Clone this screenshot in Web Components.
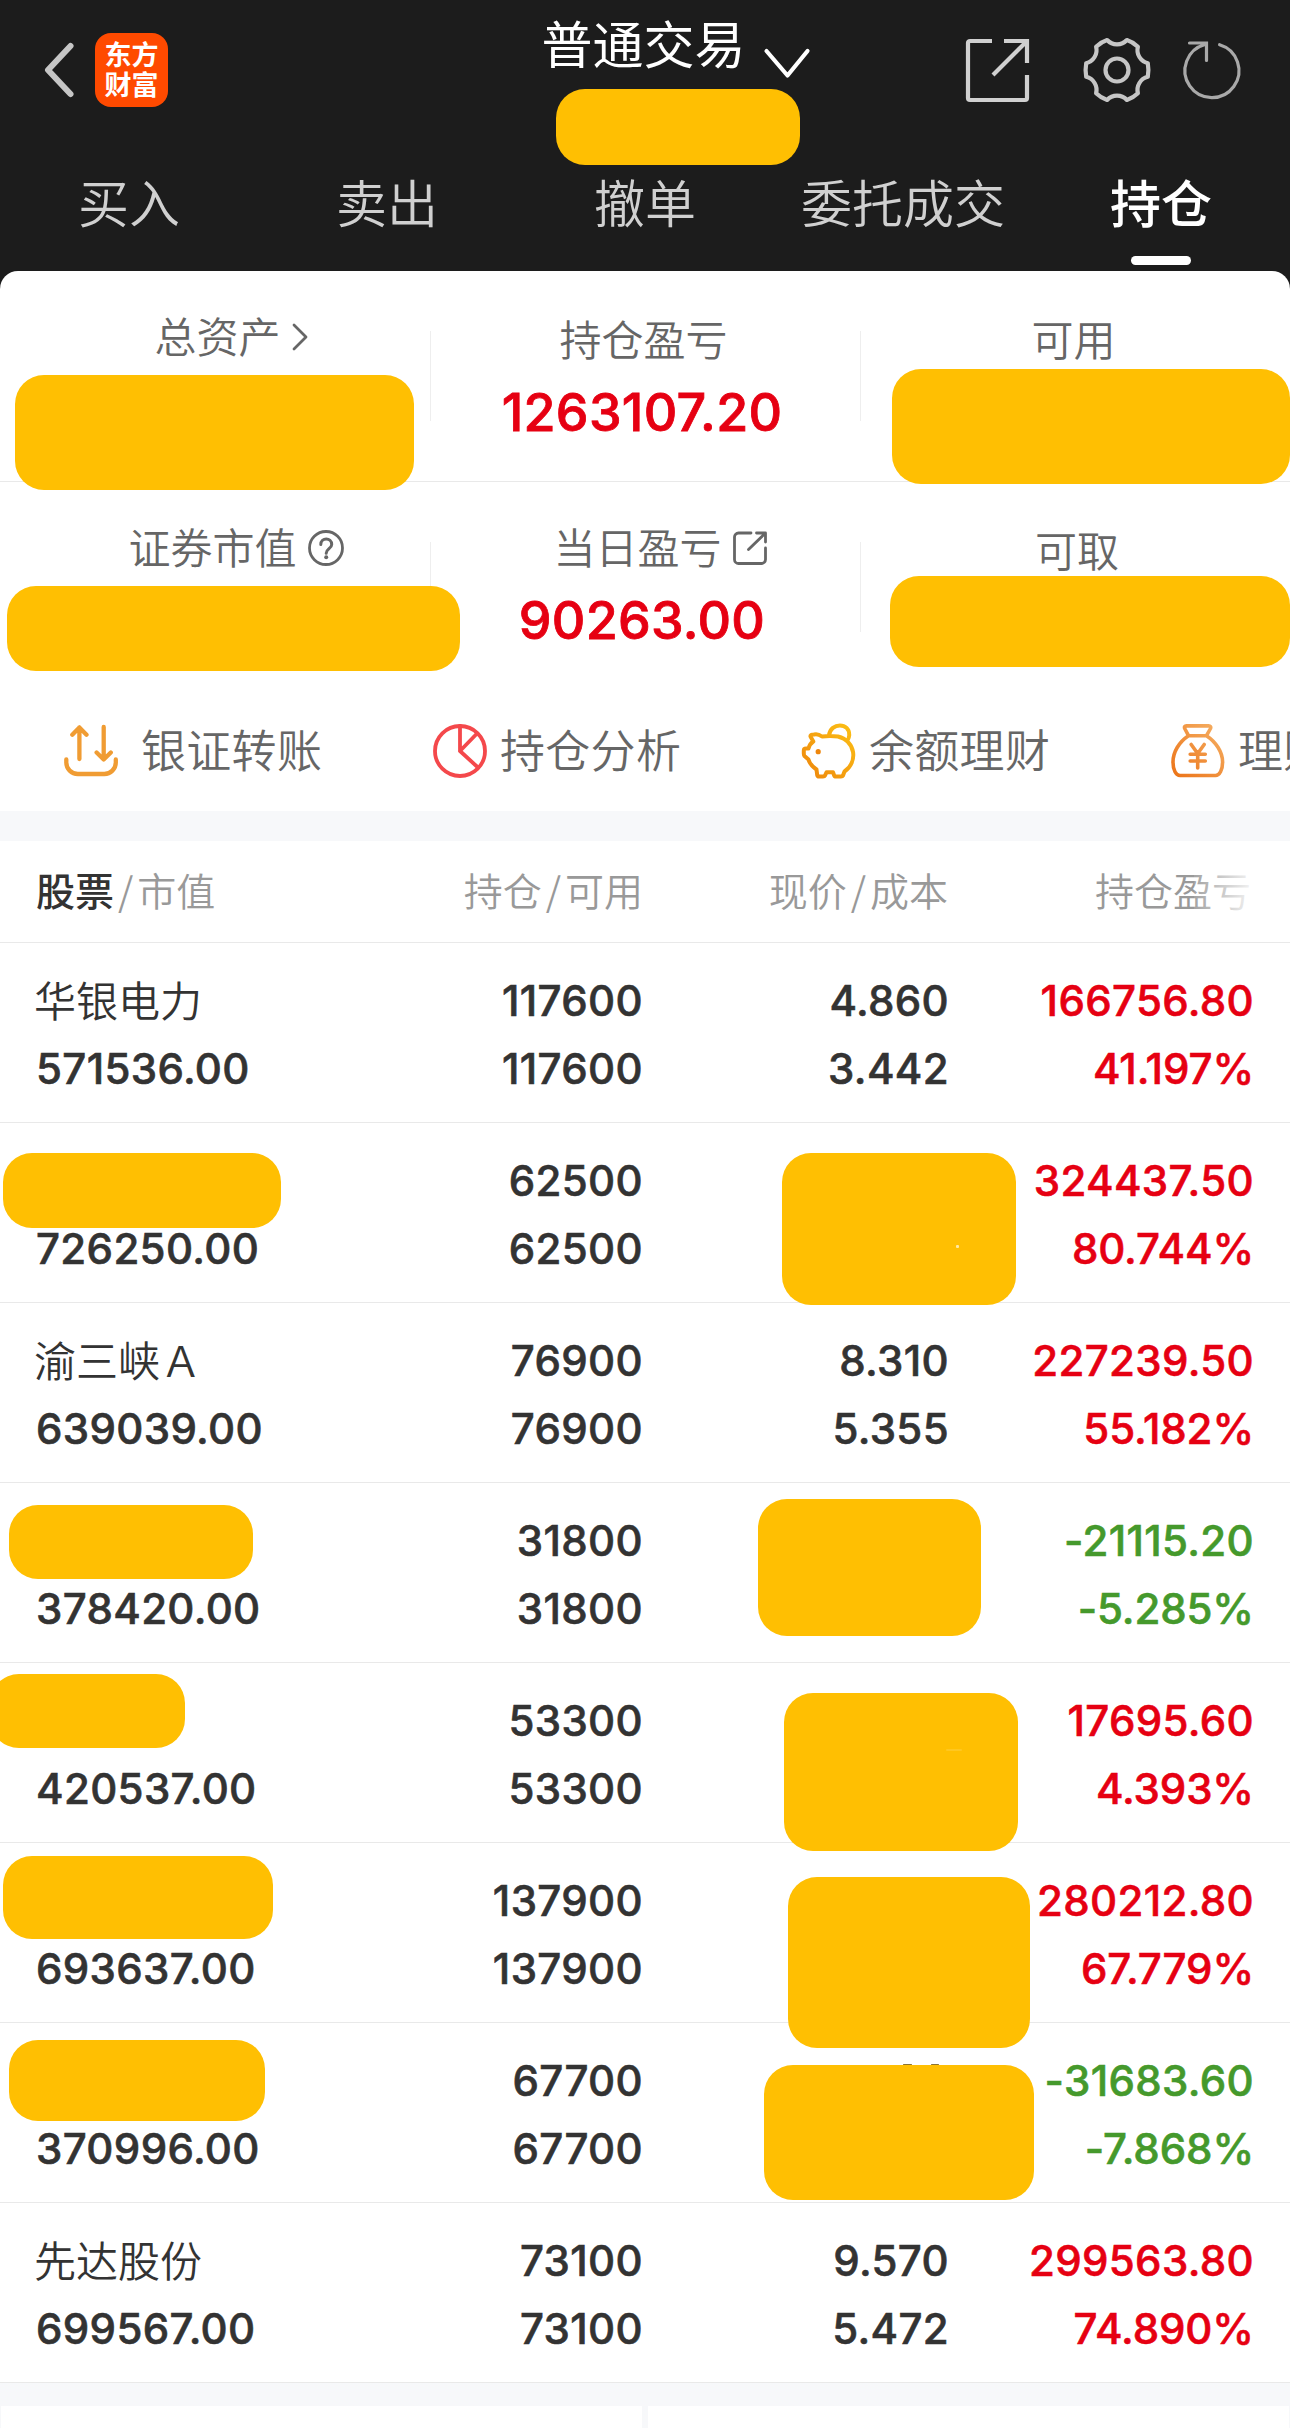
<!DOCTYPE html>
<html lang="zh-CN">
<head>
<meta charset="utf-8">
<title>普通交易</title>
<style>
  html, body {
    margin: 0;
    padding: 0;
  }

  body {
    width: 1290px;
    height: 2428px;
    overflow: hidden;
    background: #1c1c1c;
    color: #333;
    font-family: "Noto Sans CJK SC", "Noto Sans", sans-serif;
  }
</style>
</head>
<body>
<trade-app></trade-app>

<script>
/* Yellow block that hides private data. x and y are relative to its parent */
class PrivacyMask extends HTMLElement {
  constructor() {
    super();
    const shadow = this.attachShadow({ mode: "open" });
    shadow.innerHTML = `
      <style>
        :host {
          position: absolute;
          z-index: 2;
          background: #ffbf02;
          border-radius: 29px;
        }
      </style>
      <slot></slot>`;
  }

  connectedCallback() {
    const [x, y, w, h] = this.getAttribute("box").split(" ");
    this.style.left = x + "px";
    this.style.top = y + "px";
    this.style.width = w + "px";
    this.style.height = h + "px";
  }
}
customElements.define("privacy-mask", PrivacyMask);


/* All icons of the page, picked by name */
const ICONS = {
  back: [30, 56, `<path d="M26.5 4L4 28l22.5 24" stroke-width="6"/>`],
  down: [46, 32, `<path d="M2.500 3L23.500 27.500L43.500 3" stroke-width="4.200"/>`],
  share: [63, 63, `<path d="M26 2H4a2 2 0 0 0-2 2V59a2 2 0 0 0 2 2H59a2 2 0 0 0 2-2V36M38 2H61V24M61 2L27 36" stroke-width="4.200" stroke-linecap="butt" stroke-linejoin="miter"/>`],
  gear: [68, 68, `<g transform="translate(34 34)" stroke-width="4.200">
      <path d="M30.800-6.800Q32-0 30.800 6.800A13.500 13.500 0 0 0 20.900 23.300Q16 28 9.900 30A13.500 13.500 0 0 0-9.900 30Q-16 28-20.900 23.300A13.500 13.500 0 0 0-30.800 6.800Q-32 0-30.800-6.800A13.500 13.500 0 0 0-20.900-23.300Q-16-28-9.900-30A13.500 13.500 0 0 0 9.900-30Q16-28 20.900-23.300A13.500 13.500 0 0 0 30.800-6.800Z"/>
      <circle r="11.500"/></g>`],
  refresh: [60, 60, `<path d="M36.600 4.700A27 27 0 1 1 22 4.500M6.500 3H23.500V20.500" stroke-width="3.200" stroke-linejoin="miter"/>`],
  right: [17, 28, `<path d="M2 2L14 14L2 26" stroke-width="2.800"/>`],
  help: [36, 36, `<circle cx="18" cy="18" r="16.500" stroke-width="2.800"/><path d="M12.800 14.500c0-7.500 10.900-7.500 10.900 0c0 4-5.500 4.500-5.500 8.800" stroke-width="3"/><circle cx="18.200" cy="27.300" r="2" fill="currentColor" stroke="none"/>`],
  open: [34, 34, `<path d="M18 2H5.500A4 4 0 0 0 1.500 6V28.500a4 4 0 0 0 4 4H28.500a4 4 0 0 0 4-4V17M23.500 2H32.500V11M32 2.500L15.500 18.500" stroke-width="2.800"/>`],
  transfer: [54, 54, `<path d="M15.400 35V3.500M8.300 10.800L15.400 3.500L22.500 10.800M39.700 3V35.500M32.600 28.500L39.700 35.500L46.800 28.500M2.300 35.500V38.500a11.500 11.500 0 0 0 11.500 11.500H40.300a11.500 11.500 0 0 0 11.500-11.500V35.500" stroke="#f09c33" stroke-width="4.300"/>`],
  analysis: [54, 54, `<g stroke="#f4484b" stroke-width="3.800"><circle cx="27" cy="27" r="25"/><path d="M27 2V27L44 9.500M27 27L45 43.500"/></g>`],
  piggy: [54, 54, `<defs><linearGradient id="p" x1="0" y1="1" x2="1" y2="0"><stop offset="0" stop-color="#ee860c"/><stop offset="1" stop-color="#fcc015"/></linearGradient></defs>
      <g stroke="url(#p)" stroke-width="4"><path d="M12 10.500Q16 9.500 20 12.500Q28 11.500 36 12.500C54 17 56 38 42.500 47.500L41 51.500Q40.500 52.500 39 52.500H34Q32.500 52.500 32 51L31 48.300H24.500L23 51.500Q22.500 52.500 21 52.500H17Q15.500 52.500 15.200 51L14.500 45.500Q8 41 6.500 35.500L2.500 32Q1.800 31 1.800 29.500V26.500Q1.800 24.500 4 24.500H6.500Q7.500 20 11.300 17.500L8.500 12.500Q8 10.500 12 10.500ZM27 11.500C28.500-2 48-2 47.200 11.500Q47 14 45.500 16.500"/></g>
      <circle cx="16.200" cy="27.700" r="2.600" fill="#ee860c" stroke="none"/>`],
  bag: [54, 54, `<defs><linearGradient id="b" x1="0" y1="1" x2="1" y2="0"><stop offset="0" stop-color="#ec7418"/><stop offset="1" stop-color="#f5b065"/></linearGradient></defs>
      <g stroke="url(#b)" stroke-width="3.600"><path d="M15.500 1.900H37.500Q40.500 2 39.500 4.500L35.500 11.700H17.500L13.700 4.500Q12.800 2 15.500 1.900ZM17.500 11.700C8 18 2 28 2 38C2 46 5 51.500 9 51.500H44.500C48.500 51.500 51.600 46 51.600 38C51.600 28 45 18 35.500 11.700M20.200 20.500L26.700 29.500L33.200 20.500M19.200 30.200H34.300M19.200 37H34.300M26.700 29.500V44"/></g>`]
};

class AppIcon extends HTMLElement {
  constructor() {
    super();
    this.attachShadow({ mode: "open" });
  }

  connectedCallback() {
    const [w, h, body] = ICONS[this.getAttribute("name")];
    this.shadowRoot.innerHTML = `
      <style>
        :host { display: block; flex: none; width: ${w}px; height: ${h}px; }
        svg { display: block; overflow: visible; }
      </style>
      <svg width="${w}" height="${h}" viewBox="0 0 ${w} ${h}" fill="none" stroke="currentColor"
        stroke-linecap="round" stroke-linejoin="round">${body}</svg>`;
  }
}
customElements.define("app-icon", AppIcon);


class TradeHeader extends HTMLElement {
  constructor() {
    super();
    const shadow = this.attachShadow({ mode: "open" });
    shadow.innerHTML = `
      <style>
        :host {
          display: block;
          position: relative;
          height: 271px;
          color: #c6c6c6;
        }
        .bar {
          display: grid;
          grid-template-columns: 1fr auto 1fr;
          height: 140px;
        }
        .left, .right {
          display: flex;
          align-items: center;
        }
        .left { padding-left: 44px; gap: 21px; }
        .right { justify-content: flex-end; padding-right: 47px; }
        .right app-icon:nth-child(1) { color: #d0d0d0; margin-right: 54px; }
        .right app-icon:nth-child(2) { margin-right: 32px; }
        .right app-icon:nth-child(3) { color: #a9a9a9; }
        .logo {
          width: 73px;
          height: 74px;
          box-sizing: border-box;
          padding: 6px 9px 0;
          border-radius: 16px;
          background: #ff4a00;
          color: #fff;
          font-size: 27px;
          font-weight: 700;
          line-height: 30px;
          text-align: center;
        }
        .title {
          display: flex;
          color: #fff;
          font-size: 51px;
          line-height: 51px;
          font-weight: 400;
          padding: 17px 0 0 61px;
          gap: 18px;
        }
        .title app-icon { margin-top: 31px; }
        nav {
          display: grid;
          grid-template-columns: repeat(5, 1fr);
          height: 131px;
          font-size: 51px;
          font-weight: 350;
          line-height: 123px;
          text-align: center;
          color: #d0d0d0;
        }
        .active {
          display: flex;
          flex-direction: column;
          align-items: center;
          color: #fff;
          font-weight: 500;
        }
        .active::after {
          content: "";
          width: 60px;
          height: 9px;
          margin-top: -7px;
          border-radius: 5px;
          background: #fff;
        }
      </style>
      <div class="bar">
        <div class="left">
          <app-icon name="back"></app-icon>
          <div class="logo">东方财富</div>
        </div>
        <div class="title">普通交易<app-icon name="down"></app-icon></div>
        <div class="right">
          <app-icon name="share"></app-icon>
          <app-icon name="gear"></app-icon>
          <app-icon name="refresh"></app-icon>
        </div>
      </div>
      <nav>
        <div>买入</div><div>卖出</div><div>撤单</div><div>委托成交</div><div class="active">持仓</div>
      </nav>
      <privacy-mask box="555.500 89 244.500 75.500"></privacy-mask>`;
  }
}
customElements.define("trade-header", TradeHeader);


/* One cell of the account summary. "shift" and "drop" move its label */
class SummaryCell extends HTMLElement {
  constructor() {
    super();
    this.attachShadow({ mode: "open" });
  }

  connectedCallback() {
    const shift = this.getAttribute("shift") || 0;
    const drop = this.getAttribute("drop") || 0;
    const icon = this.getAttribute("icon");
    this.shadowRoot.innerHTML = `
      <style>
        :host { display: block; text-align: center; }
        .label {
          display: flex;
          justify-content: center;
          align-items: center;
          height: 60px;
          margin-left: ${shift}px;
          margin-top: ${drop}px;
          gap: 11px;
          color: #666;
          font-size: 42px;
          font-weight: 350;
          line-height: 60px;
        }
        .label app-icon { margin-top: 4px; }
        .value {
          margin-top: 15px;
          padding-right: 6px;
          color: #e60012;
          font: 500 52px/60px Inter, sans-serif;
          letter-spacing: 0.3px;
          -webkit-text-stroke: 0.8px currentColor;
        }
      </style>
      <div class="label"><span>${this.getAttribute("label")}</span>${icon ? `<app-icon name="${icon}"></app-icon>` : ""}</div>
      <div class="value"><slot></slot></div>`;
  }
}
customElements.define("summary-cell", SummaryCell);


class AccountSummary extends HTMLElement {
  constructor() {
    super();
    const shadow = this.attachShadow({ mode: "open" });
    shadow.innerHTML = `
      <style>
        :host { display: block; position: relative; height: 420px; }
        .row {
          display: grid;
          grid-template-columns: repeat(3, 1fr);
          box-sizing: border-box;
          height: 211px;
          padding-top: 37px;
          border-bottom: 1px solid #e9e9e9;
          background:
            linear-gradient(#eee, #eee) 430px 60px / 1px 90px no-repeat,
            linear-gradient(#eee, #eee) 860px 60px / 1px 90px no-repeat;
        }
        .row:nth-of-type(2) { border: none; }
      </style>
      <div class="row">
        <summary-cell label="总资产" icon="right" shift="33" drop="-3"></summary-cell>
        <summary-cell label="持仓盈亏" shift="-3">1263107.20</summary-cell>
        <summary-cell label="可用" shift="-3"></summary-cell>
      </div>
      <div class="row">
        <summary-cell label="证券市值" icon="help" shift="42" drop="-3"></summary-cell>
        <summary-cell label="当日盈亏" icon="open" shift="30" drop="-3">90263.00</summary-cell>
        <summary-cell label="可取" shift="4"></summary-cell>
      </div>
      <privacy-mask box="14.500 103.500 399.500 115"></privacy-mask>
      <privacy-mask box="891.500 97.500 398.500 115"></privacy-mask>
      <privacy-mask box="7 314.500 452.500 85"></privacy-mask>
      <privacy-mask box="890 304.500 400 91.500"></privacy-mask>`;
  }
}
customElements.define("account-summary", AccountSummary);


class QuickActions extends HTMLElement {
  constructor() {
    super();
    const shadow = this.attachShadow({ mode: "open" });
    shadow.innerHTML = `
      <style>
        :host {
          display: flex;
          height: 120px;
          padding-left: 64px;
          overflow: hidden;
          color: #666;
          font-size: 45px;
          font-weight: 350;
          line-height: 120px;
          letter-spacing: 0.3px;
          white-space: nowrap;
        }
        div {
          display: flex;
          flex: none;
          align-items: center;
          width: 369px;
          height: 120px;
          gap: 13px;
        }
        div:first-of-type { gap: 23px; }
        span { height: 120px; margin-top: -4px; }
      </style>
      <div><app-icon name="transfer"></app-icon><span>银证转账</span></div>
      <div><app-icon name="analysis"></app-icon><span>持仓分析</span></div>
      <div><app-icon name="piggy"></app-icon><span>余额理财</span></div>
      <div><app-icon name="bag"></app-icon><span>理财</span></div>`;
  }
}
customElements.define("quick-actions", QuickActions);


class HoldingHead extends HTMLElement {
  constructor() {
    super();
    const shadow = this.attachShadow({ mode: "open" });
    shadow.innerHTML = `
      <style>
        :host {
          display: grid;
          position: relative;
          grid-template-columns: 300px 307px 305px 303px;
          box-sizing: border-box;
          height: 102px;
          padding: 0 36px;
          border-bottom: 1px solid #e9e9e9;
          color: #999;
          font-size: 39px;
          font-weight: 350;
          line-height: 97px;
          text-align: right;
        }
        div:first-of-type { text-align: left; }
        b { color: #333; font-weight: 500; }
        i { font-style: normal; margin: 0 4px; }
        .fade {
          position: absolute;
          top: 20px;
          right: 30px;
          width: 66px;
          height: 60px;
          background: linear-gradient(90deg, rgba(255, 255, 255, 0.1), #fff);
        }
      </style>
      <div><b>股票</b><i>/</i>市值</div>
      <div>持仓<i>/</i>可用</div>
      <div>现价<i>/</i>成本</div>
      <div>持仓盈亏</div>
      <span class="fade"></span>`;
  }
}
customElements.define("holding-head", HoldingHead);


class HoldingRow extends HTMLElement {
  constructor() {
    super();
    this.attachShadow({ mode: "open" });
  }

  /**
   * @param {Object} data - name, value, count, price, cost, profit, rate,
   *                        masks, a list of "x y width height",
   *                        and specks, a list of [x, y, width, height, color]
   */
  set data(data) {
    const color = data.profit.startsWith("-") ? "#45992c" : "#e60012";
    const masks = (data.masks || []).map(box => `<privacy-mask box="${box}"></privacy-mask>`).join("");
    const specks = (data.specks || []).map(([x, y, w, h, fill]) =>
      `<i style="left:${x}px;top:${y}px;width:${w}px;height:${h}px;background:${fill}"></i>`).join("");
    this.shadowRoot.innerHTML = `
      <style>
        :host {
          display: grid;
          position: relative;
          grid-template-columns: 300px 307px 306px 305px;
          box-sizing: border-box;
          height: 180px;
          padding: 24px 36px 0;
          border-bottom: 1px solid #e9e9e9;
          font: 500 42px/68px Inter, sans-serif;
          letter-spacing: 0.35px;
          text-align: right;
        }
        span { display: block; height: 68px; -webkit-text-stroke: 0.6px currentColor; }
        .first { text-align: left; }
        .name {
          font-family: "Noto Sans CJK SC", sans-serif;
          font-weight: 350;
          letter-spacing: 0;
          -webkit-text-stroke: 0;
          margin: -2px 0 2px -2px;
        }
        .profit { color: ${color}; }
        .rate { letter-spacing: -0.1px; }
        i { position: absolute; z-index: 3; border-radius: 1px; }
      </style>
      <div class="first"><span class="name">${data.name || ""}</span><span>${data.value}</span></div>
      <div><span>${data.count}</span><span>${data.count}</span></div>
      <div><span>${data.price || ""}</span><span>${data.cost || ""}</span></div>
      <div class="profit"><span>${data.profit}</span><span class="rate">${data.rate}</span></div>
      ${masks}${specks}`;
  }
}
customElements.define("holding-row", HoldingRow);


const holdings = [
  { name: "华银电力", value: "571536.00", count: "117600", price: "4.860", cost: "3.442", profit: "166756.80", rate: "41.197%" },
  { value: "726250.00", count: "62500", profit: "324437.50", rate: "80.744%", masks: ["2.500 29.500 278 75.500", "781.500 29.500 234.500 152.500"], specks: [[956, 122, 3, 3, "#ffe9a8"]] },
  { name: "渝三峡Ａ", value: "639039.00", count: "76900", price: "8.310", cost: "5.355", profit: "227239.50", rate: "55.182%" },
  { value: "378420.00", count: "31800", profit: "-21115.20", rate: "-5.285%", masks: ["8.500 21.500 244.500 74.500", "757.500 16 223 137"] },
  { value: "420537.00", count: "53300", profit: "17695.60", rate: "4.393%", masks: ["-10 11 194.500 74", "783.500 29.500 234.500 158.500"], specks: [[946, 86, 16, 2, "#ffc720"]] },
  { value: "693637.00", count: "137900", profit: "280212.80", rate: "67.779%", masks: ["3 12.500 270 83.500", "787.500 34 242.500 171"] },
  { value: "370996.00", count: "67700", profit: "-31683.60", rate: "-7.868%", masks: ["8.500 17 256.500 81", "763.500 41.500 270 135"], specks: [[903, 41, 9, 1, "#8a7434"], [931, 41, 8, 1, "#8a7434"]] },
  { name: "先达股份", value: "699567.00", count: "73100", price: "9.570", cost: "5.472", profit: "299563.80", rate: "74.890%" }
];


class TradeApp extends HTMLElement {
  constructor() {
    super();
    const shadow = this.attachShadow({ mode: "open" });
    shadow.innerHTML = `
      <style>
        :host { display: block; width: 1290px; height: 2428px; overflow: hidden; background: #1c1c1c; }
        main { background: #fff; border-radius: 18px 18px 0 0; overflow: hidden; }
        .gap { height: 30px; background: #f7f8fa; }
        .foot {
          display: grid;
          grid-template-columns: 1fr 1fr;
          gap: 6px;
          height: 22px;
          padding: 23px 1px 0;
          background: #f7f8fa;
        }
        .foot div { background: #fff; }
      </style>
      <trade-header></trade-header>
      <main>
        <account-summary></account-summary>
        <quick-actions></quick-actions>
        <div class="gap"></div>
        <holding-head></holding-head>
        <section></section>
        <div class="foot"><div></div><div></div></div>
      </main>`;

    const list = shadow.querySelector("section");
    holdings.forEach(item => {
      const row = document.createElement("holding-row");
      row.data = item;
      list.append(row);
    });
  }
}
customElements.define("trade-app", TradeApp);
</script>
</body>
</html>
